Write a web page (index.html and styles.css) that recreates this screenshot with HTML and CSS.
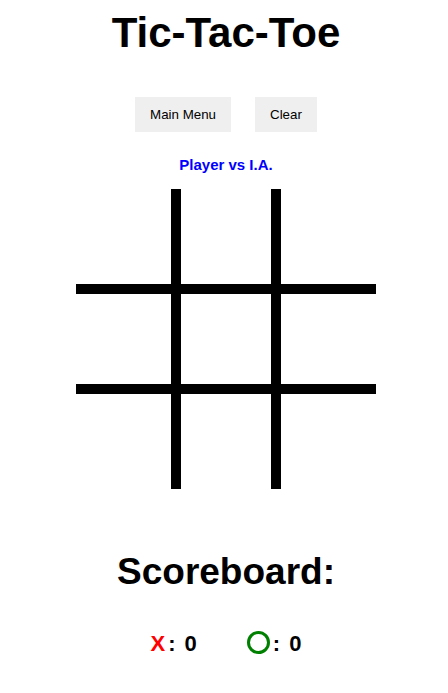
FILE: index.html
```html
<!DOCTYPE html>
<html lang="en">
<head>
<meta charset="utf-8">
<title>Tic-Tac-Toe</title>
<link rel="stylesheet" href="styles.css">
</head>
<body>
<main class="app">
  <h1 class="title">Tic-Tac-Toe</h1>
  <div class="controls">
    <button class="btn" type="button">Main Menu</button>
    <button class="btn" type="button">Clear</button>
  </div>
  <p class="mode">Player vs I.A.</p>
  <div class="board">
    <div class="cell"></div>
    <div class="cell"></div>
    <div class="cell"></div>
    <div class="cell"></div>
    <div class="cell"></div>
    <div class="cell"></div>
    <div class="cell"></div>
    <div class="cell"></div>
    <div class="cell"></div>
  </div>
  <h2 class="score-title">Scoreboard:</h2>
  <div class="scores">
    <div class="score"><span class="mark-x">X</span><span class="score-val">: 0</span></div>
    <div class="score"><span class="mark-o"></span><span class="score-val">: 0</span></div>
  </div>
</main>
</body>
</html>
```
FILE: styles.css
```css
html, body {
  margin: 0;
  padding: 0;
  background: #ffffff;
}

body {
  font-family: "Liberation Sans", Arial, sans-serif;
  color: #000000;
}

.app {
  display: flex;
  flex-direction: column;
  align-items: center;
  padding-left: 4px;
}

.title {
  margin: 9px 0 0;
  font-size: 42px;
  font-weight: bold;
  line-height: normal;
}

.controls {
  display: flex;
  gap: 24px;
  margin-top: 40px;
}

.btn {
  font-family: "Liberation Sans", Arial, sans-serif;
  font-size: 13.33px;
  line-height: 15px;
  padding: 10px 15px;
  border: none;
  background: #efefef;
  color: #000000;
  height: 35px;
}

.mode {
  margin: 24px 0 0;
  font-size: 15px;
  font-weight: bold;
  color: #0000ff;
  line-height: normal;
}

.board {
  margin-top: 16px;
  display: grid;
  grid-template-columns: repeat(3, 100px);
  grid-template-rows: repeat(3, 100px);
}

.cell {
  box-sizing: border-box;
  border: 0 solid #000000;
}

.cell:nth-child(3n+1) { border-right-width: 5px; }
.cell:nth-child(3n+2) { border-left-width: 5px; border-right-width: 5px; }
.cell:nth-child(3n) { border-left-width: 5px; }
.cell:nth-child(-n+3) { border-bottom-width: 5px; }
.cell:nth-child(n+4):nth-child(-n+6) { border-top-width: 5px; border-bottom-width: 5px; }
.cell:nth-child(n+7) { border-top-width: 5px; }

.score-title {
  margin: 62px 0 0;
  font-size: 37px;
  font-weight: bold;
  line-height: normal;
}

.scores {
  display: flex;
  gap: 50px;
  margin-top: 38px;
  font-size: 22px;
  font-weight: bold;
  line-height: normal;
}

.score {
  display: flex;
  align-items: baseline;
}

.mark-x {
  color: #ff0000;
}

.mark-o {
  display: inline-block;
  box-sizing: border-box;
  width: 23px;
  height: 23px;
  border: 3px solid #008000;
  border-radius: 50%;
  align-self: flex-end;
  margin-bottom: 5px;
}

.score-val {
  margin-left: 3px;
  word-spacing: 3px;
}
```
